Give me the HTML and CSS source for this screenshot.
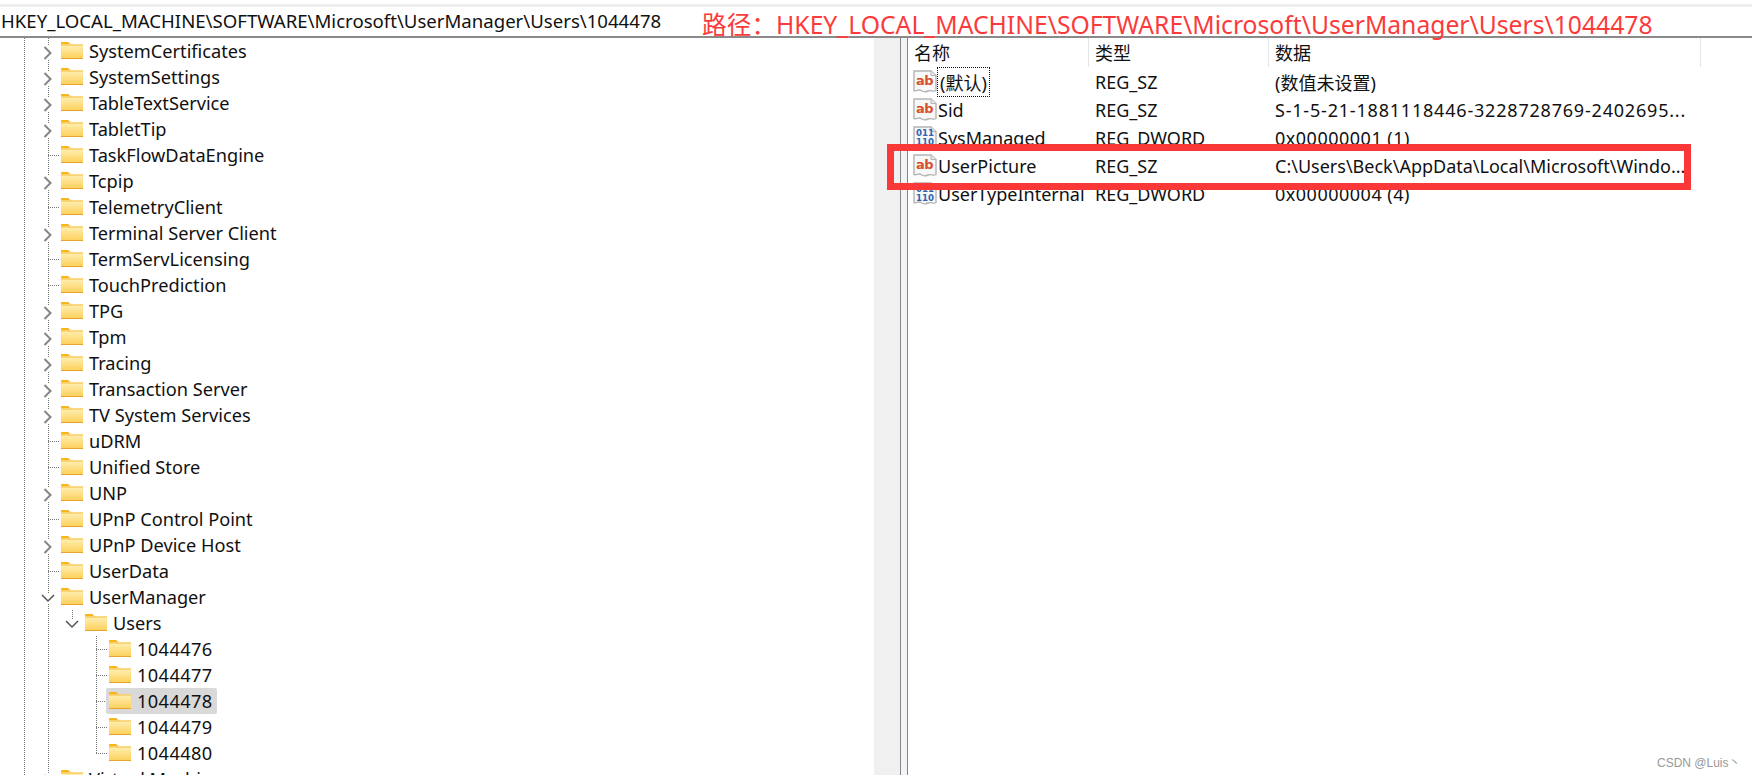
FILE: index.html
```html
<!DOCTYPE html>
<html lang="zh-CN">
<head>
  <title>Registry Editor</title>
  <meta charset="UTF-8">
  <link rel="stylesheet" href="styles.css">
</head>
<body>
  <svg class="defs" width="0" height="0">
    <defs>
      <linearGradient id="fold" x1="0" y1="0" x2="0" y2="1">
        <stop offset="0" stop-color="#fff0b5"/>
        <stop offset="1" stop-color="#fdcf57"/>
      </linearGradient>
      <symbol id="folder" viewBox="0 0 22 17">
        <path d="M0 1a1 1 0 0 1 1-1h6l3 2.500H0z" fill="#fbb417"/>
        <rect x="0" y="2.500" width="22" height="14.500" fill="url(#fold)"/>
        <rect x="0" y="2.500" width="22" height="1" fill="#f6bb3a"/>
        <rect x="0" y="16" width="22" height="1" fill="#e6a62c"/>
      </symbol>
      <symbol id="closed" viewBox="0 0 10 14">
        <path d="M1.500 1 7.500 7 1.500 13" fill="none" stroke="#858585" stroke-width="2"/>
      </symbol>
      <symbol id="open" viewBox="0 0 14 10">
        <path d="M1 2 7 8 13 2" fill="none" stroke="#555" stroke-width="1.500"/>
      </symbol>
      <symbol id="page" viewBox="0 0 24 24">
        <path d="M1 1h17l5 4.500v15c-3 2-5-1-8 .5s-5 1-7-.5-5 1-7 0z" fill="#f8f8f8" stroke="#b4b4b4" stroke-width="1.400"/>
        <path d="M18 1v4.500h5" fill="#e8e8e8" stroke="#b4b4b4"/>
      </symbol>
    </defs>
  </svg>

  <div class="topstrip"></div>
  <div class="address">HKEY_LOCAL_MACHINE\SOFTWARE\Microsoft\UserManager\Users\1044478</div>

  <main class="panes">
    <nav class="tree">
      <div class="row"><span class="twist"><svg class="chev"><use href="#closed"/></svg></span><span class="node"><svg class="folder"><use href="#folder"/></svg><span class="label">SystemCertificates</span></span></div>
      <div class="row"><span class="twist"><svg class="chev"><use href="#closed"/></svg></span><span class="node"><svg class="folder"><use href="#folder"/></svg><span class="label">SystemSettings</span></span></div>
      <div class="row"><span class="twist"><svg class="chev"><use href="#closed"/></svg></span><span class="node"><svg class="folder"><use href="#folder"/></svg><span class="label">TableTextService</span></span></div>
      <div class="row"><span class="twist"><svg class="chev"><use href="#closed"/></svg></span><span class="node"><svg class="folder"><use href="#folder"/></svg><span class="label">TabletTip</span></span></div>
      <div class="row"><span class="twist leaf"></span><span class="node"><svg class="folder"><use href="#folder"/></svg><span class="label">TaskFlowDataEngine</span></span></div>
      <div class="row"><span class="twist"><svg class="chev"><use href="#closed"/></svg></span><span class="node"><svg class="folder"><use href="#folder"/></svg><span class="label">Tcpip</span></span></div>
      <div class="row"><span class="twist leaf"></span><span class="node"><svg class="folder"><use href="#folder"/></svg><span class="label">TelemetryClient</span></span></div>
      <div class="row"><span class="twist"><svg class="chev"><use href="#closed"/></svg></span><span class="node"><svg class="folder"><use href="#folder"/></svg><span class="label">Terminal Server Client</span></span></div>
      <div class="row"><span class="twist leaf"></span><span class="node"><svg class="folder"><use href="#folder"/></svg><span class="label">TermServLicensing</span></span></div>
      <div class="row"><span class="twist leaf"></span><span class="node"><svg class="folder"><use href="#folder"/></svg><span class="label">TouchPrediction</span></span></div>
      <div class="row"><span class="twist"><svg class="chev"><use href="#closed"/></svg></span><span class="node"><svg class="folder"><use href="#folder"/></svg><span class="label">TPG</span></span></div>
      <div class="row"><span class="twist"><svg class="chev"><use href="#closed"/></svg></span><span class="node"><svg class="folder"><use href="#folder"/></svg><span class="label">Tpm</span></span></div>
      <div class="row"><span class="twist"><svg class="chev"><use href="#closed"/></svg></span><span class="node"><svg class="folder"><use href="#folder"/></svg><span class="label">Tracing</span></span></div>
      <div class="row"><span class="twist"><svg class="chev"><use href="#closed"/></svg></span><span class="node"><svg class="folder"><use href="#folder"/></svg><span class="label">Transaction Server</span></span></div>
      <div class="row"><span class="twist"><svg class="chev"><use href="#closed"/></svg></span><span class="node"><svg class="folder"><use href="#folder"/></svg><span class="label">TV System Services</span></span></div>
      <div class="row"><span class="twist leaf"></span><span class="node"><svg class="folder"><use href="#folder"/></svg><span class="label">uDRM</span></span></div>
      <div class="row"><span class="twist leaf"></span><span class="node"><svg class="folder"><use href="#folder"/></svg><span class="label">Unified Store</span></span></div>
      <div class="row"><span class="twist"><svg class="chev"><use href="#closed"/></svg></span><span class="node"><svg class="folder"><use href="#folder"/></svg><span class="label">UNP</span></span></div>
      <div class="row"><span class="twist leaf"></span><span class="node"><svg class="folder"><use href="#folder"/></svg><span class="label">UPnP Control Point</span></span></div>
      <div class="row"><span class="twist"><svg class="chev"><use href="#closed"/></svg></span><span class="node"><svg class="folder"><use href="#folder"/></svg><span class="label">UPnP Device Host</span></span></div>
      <div class="row"><span class="twist leaf"></span><span class="node"><svg class="folder"><use href="#folder"/></svg><span class="label">UserData</span></span></div>
      <div class="row"><span class="twist"><svg class="chev wide"><use href="#open"/></svg></span><span class="node"><svg class="folder"><use href="#folder"/></svg><span class="label">UserManager</span></span></div>
      <div class="row"><span class="pass"></span><span class="twist first"><svg class="chev wide"><use href="#open"/></svg></span><span class="node"><svg class="folder"><use href="#folder"/></svg><span class="label">Users</span></span></div>
      <div class="row"><span class="pass"></span><span class="pass empty"></span><span class="twist leaf"></span><span class="node"><svg class="folder"><use href="#folder"/></svg><span class="label num">1044476</span></span></div>
      <div class="row"><span class="pass"></span><span class="pass empty"></span><span class="twist leaf"></span><span class="node"><svg class="folder"><use href="#folder"/></svg><span class="label num">1044477</span></span></div>
      <div class="row"><span class="pass"></span><span class="pass empty"></span><span class="twist leaf"></span><span class="node selected"><svg class="folder"><use href="#folder"/></svg><span class="label num">1044478</span></span></div>
      <div class="row"><span class="pass"></span><span class="pass empty"></span><span class="twist leaf"></span><span class="node"><svg class="folder"><use href="#folder"/></svg><span class="label num">1044479</span></span></div>
      <div class="row"><span class="pass"></span><span class="pass empty"></span><span class="twist leaf first"></span><span class="node"><svg class="folder"><use href="#folder"/></svg><span class="label num">1044480</span></span></div>
      <div class="row"><span class="twist"><svg class="chev"><use href="#closed"/></svg></span><span class="node"><svg class="folder"><use href="#folder"/></svg><span class="label">Virtual Machine</span></span></div>
    </nav>

    <div class="gutter"></div>
    <div class="splitter"></div>

    <section class="values">
      <div class="head">
        <div class="col">名称</div>
        <div class="col">类型</div>
        <div class="col">数据</div>
      </div>

      <div class="val">
        <div class="name">
          <span class="icon"><svg class="icon-page"><use href="#page"/></svg><span class="ab">ab</span></span>
          <span class="focus">(默认)</span>
        </div>
        <div class="type">REG_SZ</div>
        <div class="data">(数值未设置)</div>
      </div>
      <div class="val">
        <div class="name">
          <span class="icon"><svg class="icon-page"><use href="#page"/></svg><span class="ab">ab</span></span>
          <span>Sid</span>
        </div>
        <div class="type">REG_SZ</div>
        <div class="data sid">S-1-5-21-1881118446-3228728769-2402695...</div>
      </div>
      <div class="val">
        <div class="name">
          <span class="icon"><svg class="icon-page"><use href="#page"/></svg><span class="bin">011<br>110</span></span>
          <span>SysManaged</span>
        </div>
        <div class="type">REG_DWORD</div>
        <div class="data hex">0x00000001 (1)</div>
      </div>
      <div class="val">
        <div class="name">
          <span class="icon"><svg class="icon-page"><use href="#page"/></svg><span class="ab">ab</span></span>
          <span>UserPicture</span>
        </div>
        <div class="type">REG_SZ</div>
        <div class="data">C:\Users\Beck\AppData\Local\Microsoft\Windo...</div>
      </div>
      <div class="val">
        <div class="name">
          <span class="icon"><svg class="icon-page"><use href="#page"/></svg><span class="bin">011<br>110</span></span>
          <span>UserTypeInternal</span>
        </div>
        <div class="type">REG_DWORD</div>
        <div class="data hex">0x00000004 (4)</div>
      </div>
    </section>
  </main>

  <!-- annotations drawn on top of the screenshot -->
  <div class="note">路径：HKEY_LOCAL_MACHINE\SOFTWARE\Microsoft\UserManager\Users\1044478</div>
  <div class="redbox"></div>
  <div class="mark">CSDN @Luis丶</div>
</body>
</html>
```

FILE: styles.css
```css
html, body {
  height: 100%;
}
body {
  background: #fff;
  color: #111;
  font-family: "Noto Sans", "Noto Sans CJK SC", sans-serif;
  font-size: 18px;
  height: 775px;
  margin: 0;
  overflow: hidden;
  position: relative;
}
.defs {
  position: absolute;
}

/* TOP BAR */
.topstrip {
  background: #eee;
  height: 3px;
  margin-top: 4px;
}
.address {
  border-bottom: 2px solid #8a8a8a;
  font-size: 18.6px;
  height: 29px;
  line-height: 27px;
  padding-left: 1px;
  white-space: nowrap;
}

/* PANES */
.panes {
  display: flex;
  height: 738px;
}
.tree {
  background: repeating-linear-gradient(to bottom, #777 0 1px, transparent 1px 2px) 24px 0 / 1px 100% no-repeat;
  flex: none;
  overflow: hidden;
  padding-left: 36px;
  width: 838px;
}
.gutter {
  background: #f0f0f0;
  flex: none;
  width: 26px;
}
.splitter {
  background: #f1f3f6;
  border-left: 1px solid #868686;
  border-right: 1px solid #868686;
  flex: none;
  width: 6px;
}
.values {
  flex: 1;
}

/* TREE ROWS */
.row {
  align-items: center;
  display: flex;
  height: 26px;
  white-space: nowrap;
}
.twist, .pass {
  background: repeating-linear-gradient(to bottom, #777 0 1px, transparent 1px 2px) 12px 0 / 1px 100% no-repeat;
  display: block;
  flex: none;
  height: 26px;
  position: relative;
  width: 24px;
}
.pass.empty {
  background: none;
}
.twist.first {
  background-size: 1px 50%;
}
.twist.leaf::after {
  background: repeating-linear-gradient(to right, #777 0 1px, transparent 1px 2px);
  content: "";
  height: 1px;
  left: 12px;
  position: absolute;
  top: 13px;
  width: 12px;
}
.chev {
  background: #fff;
  height: 14px;
  left: 7px;
  position: absolute;
  top: 8px;
  width: 10px;
}
.chev.wide {
  height: 10px;
  left: 5px;
  top: 9px;
  width: 14px;
}
.node {
  align-items: center;
  border-radius: 2px;
  display: flex;
  gap: 6px;
  height: 26px;
  margin-left: -2px;
  padding: 0 4px 0 3px;
  position: relative;
}
.node.selected {
  background: #d9d9d9;
}
.folder {
  flex: none;
  height: 17px;
  margin-top: -1px;
  width: 22px;
}
.label {
  font-size: 18.2px;
}
.label.num {
  letter-spacing: .4px;
}

/* VALUE LIST */
.head {
  display: grid;
  grid-template-columns: 181px 180px 432px;
  height: 30px;
}
.col {
  border-right: 1px solid #e5e5e5;
  height: 29px;
  line-height: 31px;
  padding-left: 6px;
}
.val {
  align-items: center;
  display: grid;
  grid-template-columns: 180px 180px 1fr;
  height: 28px;
  white-space: nowrap;
}
.name {
  align-items: center;
  display: flex;
  gap: 1px;
  padding-left: 5px;
}
.type {
  padding-left: 7px;
}
.data {
  padding-left: 7px;
}
.data.sid {
  letter-spacing: .8px;
}
.data.hex {
  letter-spacing: .5px;
}
.icon {
  display: block;
  flex: none;
  height: 24px;
  position: relative;
  width: 24px;
}
.icon-page {
  height: 24px;
  width: 24px;
}
.ab {
  color: #d9512c;
  font-family: "DejaVu Sans", sans-serif;
  font-size: 13px;
  font-weight: 700;
  left: 3px;
  letter-spacing: -.5px;
  line-height: 20px;
  position: absolute;
  top: 1px;
}
.bin {
  color: #2f62b5;
  font-family: "DejaVu Sans", sans-serif;
  font-size: 8.6px;
  font-weight: 700;
  left: 3px;
  line-height: 8.5px;
  position: absolute;
  top: 3px;
}
.focus {
  outline: 1px dotted #111;
  outline-offset: 0;
  padding: 1px 2px;
}

/* ANNOTATIONS */
.note {
  color: #fb3b3b;
  font-size: 24.7px;
  left: 702px;
  line-height: 30px;
  position: absolute;
  top: 10px;
  white-space: nowrap;
}
.redbox {
  border: 7px solid #fb3838;
  box-sizing: border-box;
  height: 46px;
  left: 887px;
  position: absolute;
  top: 144px;
  width: 804px;
}
.mark {
  color: #999;
  font-family: "Liberation Sans", "Noto Sans CJK SC", sans-serif;
  font-size: 12px;
  left: 1657px;
  position: absolute;
  top: 753px;
}
```
